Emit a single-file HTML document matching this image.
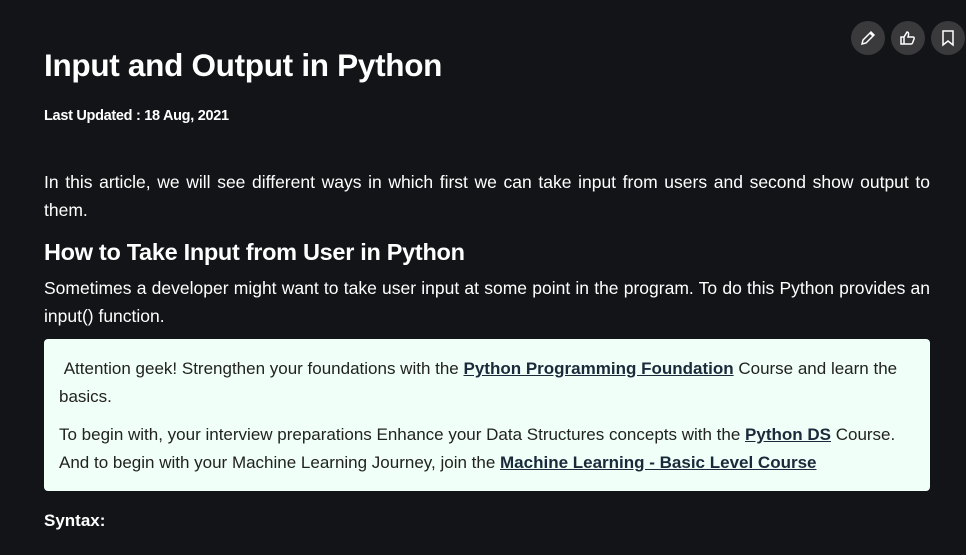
<!DOCTYPE html>
<html><head><style>
body{margin:0;background:#131417;width:966px;height:555px;overflow:hidden;font-family:"Liberation Sans",sans-serif;color:#fff}
.t{position:absolute;left:44px;top:47px;font-size:31.5px;letter-spacing:-0.3px;margin:0;font-weight:bold}
.d{position:absolute;left:44px;top:108px;font-size:14.5px;font-weight:bold;letter-spacing:-0.3px}
p{margin:0}
.p{position:absolute;left:44px;width:886px;font-size:17.5px;line-height:28px;text-align:justify;letter-spacing:0}
h2{position:absolute;left:44px;top:239px;margin:0;font-size:23.5px;letter-spacing:-0.3px}
.box{position:absolute;left:44px;top:339px;width:856px;height:135px;padding:16px 15px 1px;background:#f0fff8;border-radius:4px;color:#222;font-size:17px;line-height:28px;letter-spacing:0}
.box a{color:#1a2a3a;font-weight:bold;text-decoration:underline}
.ic{position:absolute;top:21px;width:34px;height:34px;border-radius:50%;background:#3a3a3d}
.ic svg{position:absolute;left:8px;top:8px}
</style></head><body>
<div class="ic" style="left:851px"><svg width="18" height="18" viewBox="0 0 18 18" fill="none" stroke="#fff" stroke-width="1.5"><path d="M3 15l1-4 8-8 3 3-8 8z M11 4l3 3"/></svg></div>
<div class="ic" style="left:891px"><svg width="18" height="18" viewBox="0 0 18 18" fill="none" stroke="#fff" stroke-width="1.5"><path d="M2 8h3v7H2z M5 8l3-5c1 0 2 1 1.5 3L9 8h5c1 0 1.5 1 1 2l-1.5 4c-.3.7-1 1-1.5 1H5"/></svg></div>
<div class="ic" style="left:931px"><svg width="18" height="18" viewBox="0 0 18 18" fill="none" stroke="#fff" stroke-width="1.5"><path d="M4 2h10v14l-5-4-5 4z"/></svg></div>
<h1 class="t">Input and Output in Python</h1>
<div class="d">Last Updated : 18 Aug, 2021</div>
<p class="p" style="top:168px">In this article, we will see different ways in which first we can take input from users and second show output to them.</p>
<h2>How to Take Input from User in Python</h2>
<p class="p" style="top:274px">Sometimes a developer might want to take user input at some point in the program. To do this Python provides an input() function.</p>
<div class="box"><p>&nbsp;Attention geek! Strengthen your foundations with the <a>Python Programming Foundation</a> Course and learn the basics.</p><p style="margin-top:10px">To begin with, your interview preparations Enhance your Data Structures concepts with the <a>Python DS</a> Course. And to begin with your Machine Learning Journey, join the <a>Machine Learning - Basic Level Course</a></p></div>
<div style="position:absolute;left:44px;top:511px;font-size:17px;font-weight:bold">Syntax:</div>
</body></html>
